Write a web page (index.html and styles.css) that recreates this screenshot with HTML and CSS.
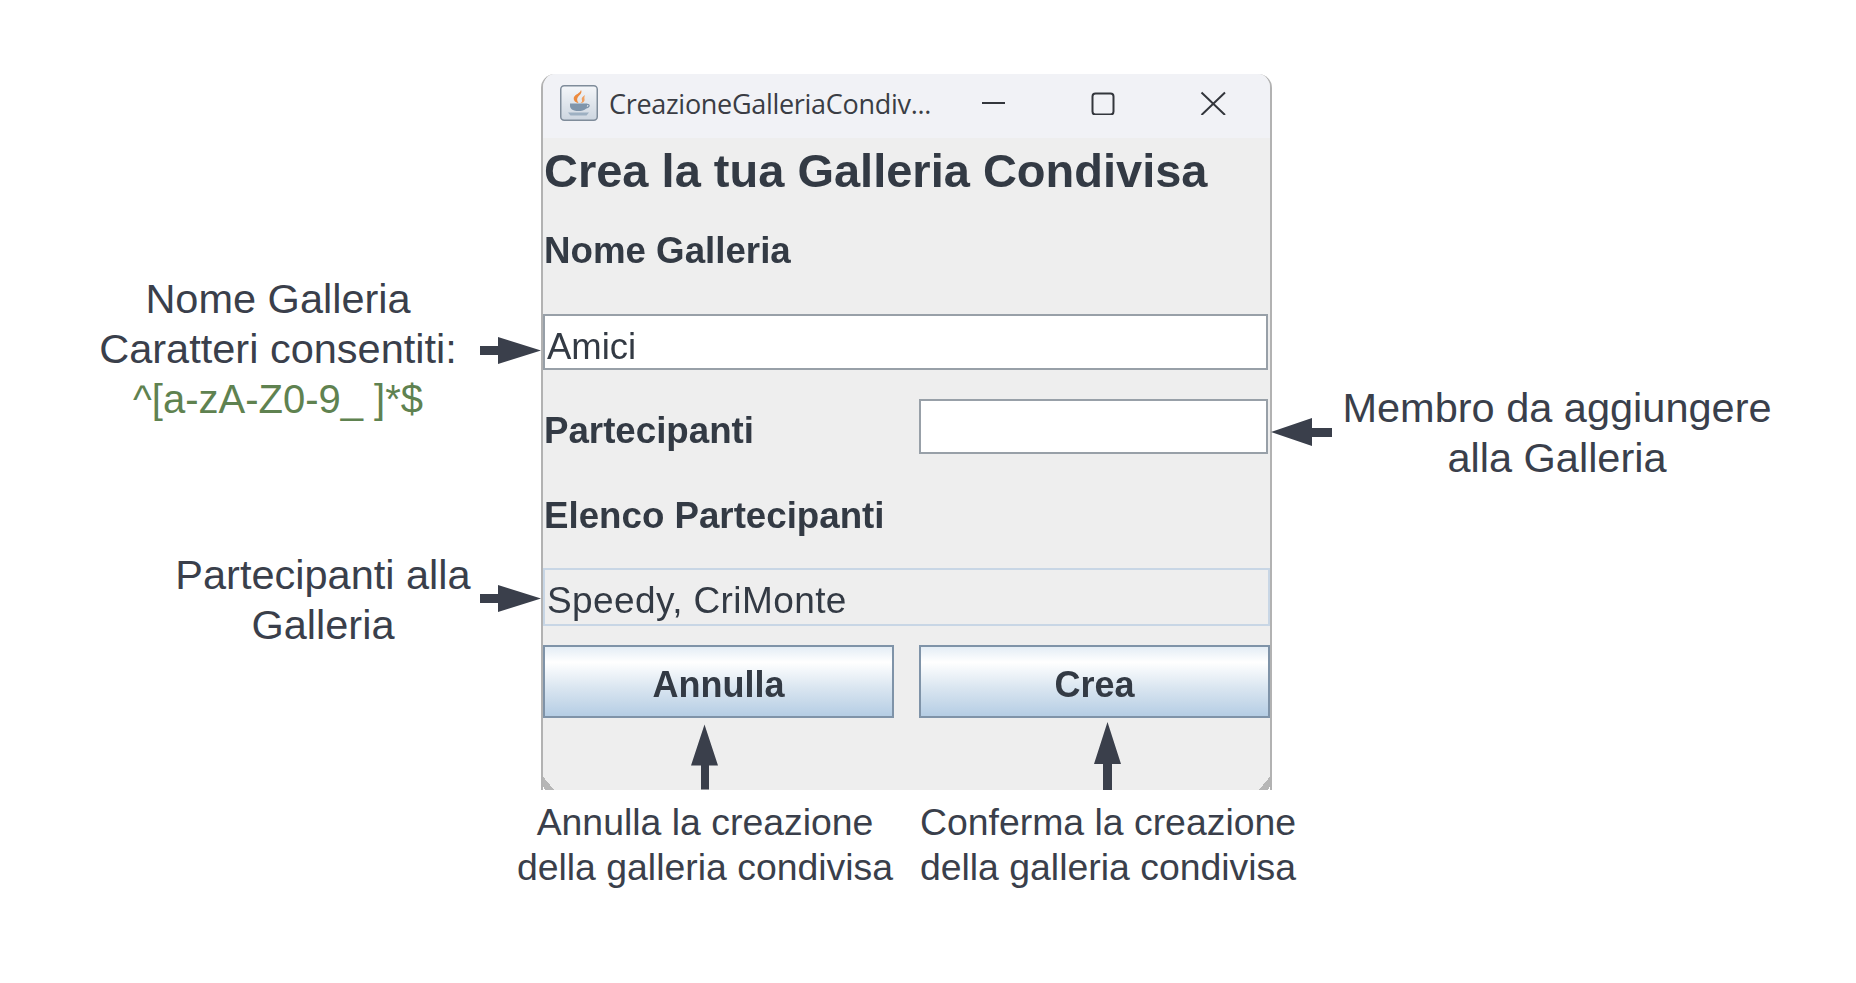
FILE: index.html
```html
<!DOCTYPE html>
<html lang="it">
<head>
<meta charset="utf-8">
<title>CreazioneGalleriaCondivisa</title>
<link rel="stylesheet" href="styles.css">
</head>
<body>
<main class="canvas">
  <section class="window">
    <header class="titlebar">
      <svg class="app-icon" viewBox="0 0 38 36" aria-hidden="true">
        <defs>
          <linearGradient id="iconbg" x1="0" y1="0" x2="0" y2="1">
            <stop offset="0" stop-color="#f4f6f9"/>
            <stop offset="1" stop-color="#cdd6e0"/>
          </linearGradient>
        </defs>
        <rect x="0.75" y="0.75" width="36.5" height="34.5" rx="3.5" fill="url(#iconbg)" stroke="#7f8c9a" stroke-width="1.5"/>
        <path d="M21 5c1.500 3-1 4.500-3 7-1.500 2-1 4 .5 6-3.500-.5-5.500-3-4.500-6 1-2.500 6-3.500 7-7z" fill="#ec8a3e"/>
        <path d="M25 10c-2.500 1.500-4 3-3 5.500.3 1-.5 2-1.500 2.500 2.500 0 4.500-1.500 4-4-.3-1.500 0-2.500.5-4z" fill="#f0a060"/>
        <path d="M10 18.500h17v2.500c0 3-3.500 5-8.500 5s-8.500-2-8.500-5z" fill="#7f95ab"/>
        <path d="M27 19.500c3-.5 3 3-1.500 3.500" fill="none" stroke="#7f95ab" stroke-width="1.300"/>
        <path d="M8 27.500h21l-2.500 3H10.500z" fill="#9db0c2"/>
      </svg>
      <span class="window-title">CreazioneGalleriaCondiv...</span>
      <svg class="controls" viewBox="0 0 244 24" aria-hidden="true">
        <path d="M0 12H23" class="glyph"/>
        <rect x="110.500" y="2.500" width="21" height="21" rx="3" class="glyph"/>
        <path d="M219.500 1.500L243 24M243 1.500L219.500 24" class="glyph"/>
      </svg>
    </header>
    <div class="content">
      <h1 class="heading">Crea la tua Galleria Condivisa</h1>
      <div class="label label-name">Nome Galleria</div>
      <div class="input input-name">Amici</div>
      <div class="member-row">
        <div class="label label-member">Partecipanti</div>
        <div class="input input-member"></div>
      </div>
      <div class="label label-list">Elenco Partecipanti</div>
      <div class="list-field">Speedy, CriMonte</div>
      <div class="buttons">
        <div class="button">Annulla</div>
        <div class="button">Crea</div>
      </div>
    </div>
  </section>

  <p class="note note-name">Nome Galleria<br>Caratteri consentiti:<br><span class="regex">^[a-zA-Z0-9_ ]*$</span></p>
  <p class="note note-list">Partecipanti alla<br>Galleria</p>
  <p class="note note-member">Membro da aggiungere<br>alla Galleria</p>
  <p class="caption caption-cancel">Annulla la creazione<br>della galleria condivisa</p>
  <p class="caption caption-confirm">Conferma la creazione<br>della galleria condivisa</p>

  <svg class="arrow arrow-name" viewBox="0 0 61 27" aria-hidden="true"><path d="M0 9H18V0L61 13.500 18 27V18H0z"/></svg>
  <svg class="arrow arrow-list" viewBox="0 0 61 27" aria-hidden="true"><path d="M0 9H18V0L61 13.500 18 27V18H0z"/></svg>
  <svg class="arrow arrow-member" viewBox="0 0 61 28" aria-hidden="true"><path d="M61 10H41V0L0 14 41 28V19H61z"/></svg>
  <svg class="arrow arrow-cancel" viewBox="0 0 27 65" aria-hidden="true"><path d="M13.500 0L27 41H18V65H10V41H0z"/></svg>
  <svg class="arrow arrow-confirm" viewBox="0 0 27 68" aria-hidden="true"><path d="M13.500 0L27 42H18V68H9V42H0z"/></svg>
</main>
</body>
</html>
```
FILE: styles.css
```css
* { box-sizing: border-box; }
html, body { margin: 0; background: #fff; }
.canvas {
  position: relative;
  width: 1856px;
  height: 983px;
  overflow: hidden;
  background: #fff;
  font-family: "Liberation Sans", Arial, sans-serif;
}

/* Dialog */
.window {
  position: absolute;
  left: 541px;
  top: 74px;
  width: 731px;
  height: 716px;
  background: #eeeeee;
  border-left: 2px solid #b2b2b2;
  border-right: 2px solid #b2b2b2;
  border-radius: 14px 14px 0 0;
  overflow: hidden;
  color: #333a44;
  filter: blur(0.35px);
}
.window::before,
.window::after {
  content: "";
  position: absolute;
  bottom: 0;
  width: 13px;
  height: 16px;
}
.window::before {
  left: -2px;
  background: linear-gradient(to top right, #fff 0 18%, #b6b6b6 18% 50%, transparent 50%);
}
.window::after {
  right: -2px;
  background: linear-gradient(to top left, #fff 0 18%, #b6b6b6 18% 50%, transparent 50%);
}
.titlebar {
  display: flex;
  align-items: center;
  height: 64px;
  padding: 0 44px 0 17px;
  background: #f1f2f6;
}
.app-icon { width: 38px; height: 36px; flex: none; margin-top: -6px; }
.window-title {
  margin: -5px 0 0 11px;
  font-family: "Open Sans", sans-serif;
  font-size: 27px;
  letter-spacing: -0.3px;
  white-space: nowrap;
  color: #3a3d44;
}
.controls { width: 244px; height: 24px; flex: none; margin: -7px 0 0 auto; }
.glyph { fill: none; stroke: #33363c; stroke-width: 2; }

.content { display: flex; flex-direction: column; }
.heading {
  margin: 0;
  padding-left: 1px;
  height: 66px;
  line-height: 66px;
  font-size: 47px;
  font-weight: 700;
  white-space: nowrap;
}
.label {
  font-size: 36.7px;
  padding-left: 1px;
  font-weight: 700;
  white-space: nowrap;
}
.label-name { height: 92px; line-height: 94px; margin-bottom: 18px; }
.input {
  height: 56px;
  line-height: 54px;
  padding: 4px 0 0 2px;
  font-size: 36.5px;
  background: #fff;
  border: 2px solid #98a0a8;
}
.input-name { width: 725px; margin-bottom: 29px; }
.member-row {
  display: grid;
  grid-template-columns: 376px 349px;
  align-items: center;
  height: 55px;
}
.label-member { padding-top: 9px; }
.input-member { height: 55px; }
.label-list { height: 40px; line-height: 42px; margin: 41px 0 33px; }
.list-field {
  width: 727px;
  height: 58px;
  line-height: 53px;
  padding: 4px 0 0 2px;
  font-size: 37px;
  letter-spacing: 0.4px;
  border: 2px solid #c8d6e5;
}
.buttons {
  display: grid;
  grid-template-columns: 351px 351px;
  column-gap: 25px;
  margin-top: 19px;
}
.button {
  height: 73px;
  line-height: 75px;
  text-align: center;
  font-size: 36px;
  font-weight: 700;
  border: 2px solid #7f93a8;
  background: linear-gradient(#e4edf5 0%, #ffffff 22%, #d9e5f0 60%, #b5cde4 100%);
}

/* Annotations around the dialog */
.note, .caption {
  position: absolute;
  margin: 0;
  text-align: center;
  color: #3a3f4b;
  white-space: nowrap;
}
.note { font-size: 41.5px; line-height: 50px; }
.caption { font-size: 37.4px; line-height: 45px; }
.regex { color: #5f8250; font-size: 40px; }
.note-name { left: 78px; top: 274px; width: 400px; }
.note-list { left: 123px; top: 550px; width: 400px; }
.note-member { left: 1307px; top: 383px; width: 500px; }
.caption-cancel { left: 455px; top: 800px; width: 500px; }
.caption-confirm { left: 858px; top: 800px; width: 500px; }

.arrow { position: absolute; fill: #3a3f4b; }
.arrow-name { left: 480px; top: 337px; width: 61px; height: 27px; }
.arrow-list { left: 480px; top: 585px; width: 61px; height: 27px; }
.arrow-member { left: 1271px; top: 418px; width: 61px; height: 28px; }
.arrow-cancel { left: 691px; top: 724px; width: 27px; height: 66px; }
.arrow-confirm { left: 1094px; top: 722px; width: 27px; height: 68px; }
```
